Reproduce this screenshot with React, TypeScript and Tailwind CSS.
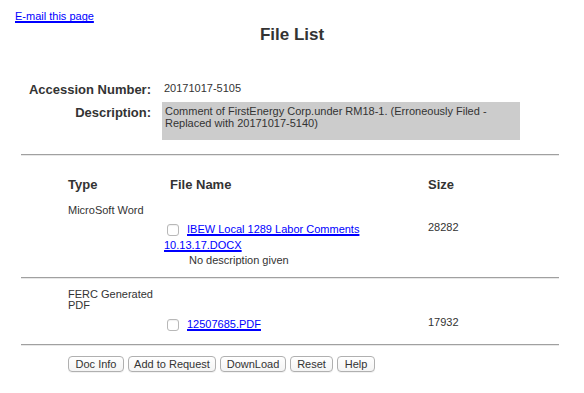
import React from 'react';

const font = { fontFamily: '"Liberation Sans", Arial, sans-serif' };

function Rule({ className = '' }: { className?: string }) {
  return <div className={`ml-[21px] w-[538px] h-0 border-t border-t-[#a0a0a0] border-b border-b-[#e8e8e8] ${className}`} />;
}

function Check() {
  return (
    <span className="inline-block align-middle w-[12px] h-[12px] ml-[3px] mr-[8px] rounded-[3px] border border-[#b8b8b8] bg-white shadow-[inset_0_1px_1px_rgba(0,0,0,0.06)]" />
  );
}

function FileRow({ name, size, desc }: { name: string; size: string; desc?: string }) {
  return (
    <div className="grid grid-cols-[96px_264px_1fr] pl-[68px]">
      <div />
      <div>
        <div className="text-[11px] leading-[16px]">
          <Check />
          <a href="#" className="text-[#0000ff] underline decoration-[2px] [text-decoration-skip-ink:none]">{name}</a>
        </div>
        {desc && <div className="mt-[1px] pl-[25px] text-[11px] leading-[13px]">{desc}</div>}
      </div>
      <div className="text-[11px] leading-[13px]">{size}</div>
    </div>
  );
}

const buttons = [
  { label: 'Doc Info', w: 'w-[56px]' },
  { label: 'Add to Request', w: 'w-[88px]' },
  { label: 'DownLoad', w: 'w-[66px]' },
  { label: 'Reset', w: 'w-[43px]' },
  { label: 'Help', w: 'w-[38px]' },
];

export default function App() {
  return (
    <div className="min-h-screen w-full bg-white text-[#333]" style={font}>
      <div className="pl-[15px] pt-[10px] text-[11px] leading-[13px]">
        <a href="#" className="text-[#0000ff] underline decoration-[2px] [text-decoration-skip-ink:none]">E-mail this page</a>
      </div>
      <h1 className="mt-[2px] text-center text-[17px] leading-[20px] font-bold">File List</h1>

      <div className="mt-[37px] grid grid-cols-[151px_358px] gap-x-[11px]">
        <div className="h-[20px] text-right text-[13px] leading-[16px] font-bold">Accession Number:</div>
        <div className="pl-[2px] text-[11px] leading-[13px]">20171017-5105</div>
        <div className="pt-[3px] text-right text-[13px] leading-[16px] font-bold">Description:</div>
        <div className="h-[38px] bg-[#cccccc] pl-[3px] pt-[3px] text-[11px] leading-[12px]">
          Comment of FirstEnergy Corp.under RM18-1. (Erroneously Filed - Replaced with 20171017-5140)
        </div>
      </div>

      <Rule className="mt-[14px]" />

      <div className="mt-[21px] grid grid-cols-[96px_264px_1fr] pl-[68px] text-[13px] leading-[16px] font-bold">
        <div>Type</div>
        <div className="pl-[6px]">File Name</div>
        <div>Size</div>
      </div>

      <div className="mt-[11px] pl-[68px] text-[11px] leading-[13px]">MicroSoft Word</div>
      <div className="mt-[4px]">
        <FileRow name="IBEW Local 1289 Labor Comments 10.13.17.DOCX" size="28282" desc="No description given" />
      </div>

      <Rule className="mt-[10px]" />

      <div className="mt-[10px] pl-[68px] w-[158px] text-[11px] leading-[11px]">FERC Generated PDF</div>
      <div className="mt-[5px]">
        <FileRow name="12507685.PDF" size="17932" />
      </div>

      <Rule className="mt-[12px]" />

      <div className="mt-[10px] flex gap-[4px] pl-[68px]">
        {buttons.map((b) => (
          <button
            key={b.label}
            className={`${b.w} h-[16px] rounded-[4px] border border-[#b0b0b0] bg-gradient-to-b from-white to-[#f4f4f4] text-[11px] leading-[14px] text-[#333] shadow-[0_1px_0_rgba(0,0,0,0.05)]`}
          >
            {b.label}
          </button>
        ))}
      </div>
    </div>
  );
}
